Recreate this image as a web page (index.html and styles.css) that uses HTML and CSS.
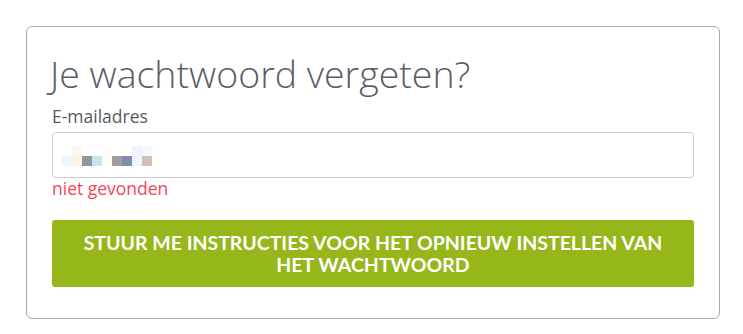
FILE: index.html
```html
<!DOCTYPE html>
<html lang="nl">
<head>
  <meta charset="UTF-8" />
  <title>Je wachtwoord vergeten?</title>
  <link rel="stylesheet" href="styles.css">
</head>
<body>

  <div class="card">
    <h2>Je wachtwoord vergeten?</h2>

    <form class="reset-form">
      <label for="email">E-mailadres</label>
      <div class="input" id="email">
        <div class="blur">
          <span></span><span style="background:#faf8ec"></span><span></span><span></span><span style="background:#fdfcf9"></span><span></span><span></span><span style="background:#eef4fe"></span><span style="background:#f4f8fe"></span>
          <span style="background:#eef6fd"></span><span style="background:#f8f5e0"></span><span style="background:#94949c"></span><span style="background:#c8e4ec"></span><span style="background:#fdfcfb"></span><span style="background:#a09e9e"></span><span style="background:#7f8db0"></span><span style="background:#eef4fe"></span><span style="background:#cfc1b8"></span>
        </div>
      </div>
      <p class="error">niet gevonden</p>

      <button type="button">Stuur me instructies voor het opnieuw instellen van het wachtwoord</button>
    </form>
  </div>

</body>
</html>
```

FILE: styles.css
```css
body {
  margin: 0;
  padding: 26px 23px 0 26px;
  background: #ffffff;
  font-family: "Open Sans", Arial, sans-serif;
  color: #555a64;
}

.card {
  border: 1px solid #aaaaaa;
  border-radius: 6px;
  padding: 23px 25px 29px 25px;
  height: 239px;
}

h2 {
  margin: 0 0 0 -2px;
  font-size: 37.5px;
  font-weight: 300;
  line-height: 48px;
  color: #5a5e68;
}

.reset-form label {
  display: block;
  margin-top: 6px;
  font-size: 17.5px;
  line-height: 24px;
  color: #555a60;
}

.input {
  margin-top: 4px;
  height: 44px;
  border: 1px solid #cccccc;
  border-radius: 4px;
  display: flex;
  align-items: center;
  padding-left: 9px;
}

.blur {
  display: grid;
  grid-template-columns: repeat(9, 10px);
  grid-template-rows: 10px 10px;
  margin-top: 2px;
}

.blur span {
  background: #ffffff;
}

.error {
  margin: 0;
  font-size: 17.5px;
  line-height: 20px;
  color: #f5465c;
}

button {
  display: block;
  width: 100%;
  margin-top: 22px;
  height: 67px;
  padding: 0 28px;
  border: none;
  border-radius: 3px;
  background: #95b71a;
  color: #ffffff;
  font-family: Lato, "Open Sans", sans-serif;
  font-weight: 700;
  font-size: 19.5px;
  line-height: 22px;
  text-transform: uppercase;
  cursor: pointer;
}
```
